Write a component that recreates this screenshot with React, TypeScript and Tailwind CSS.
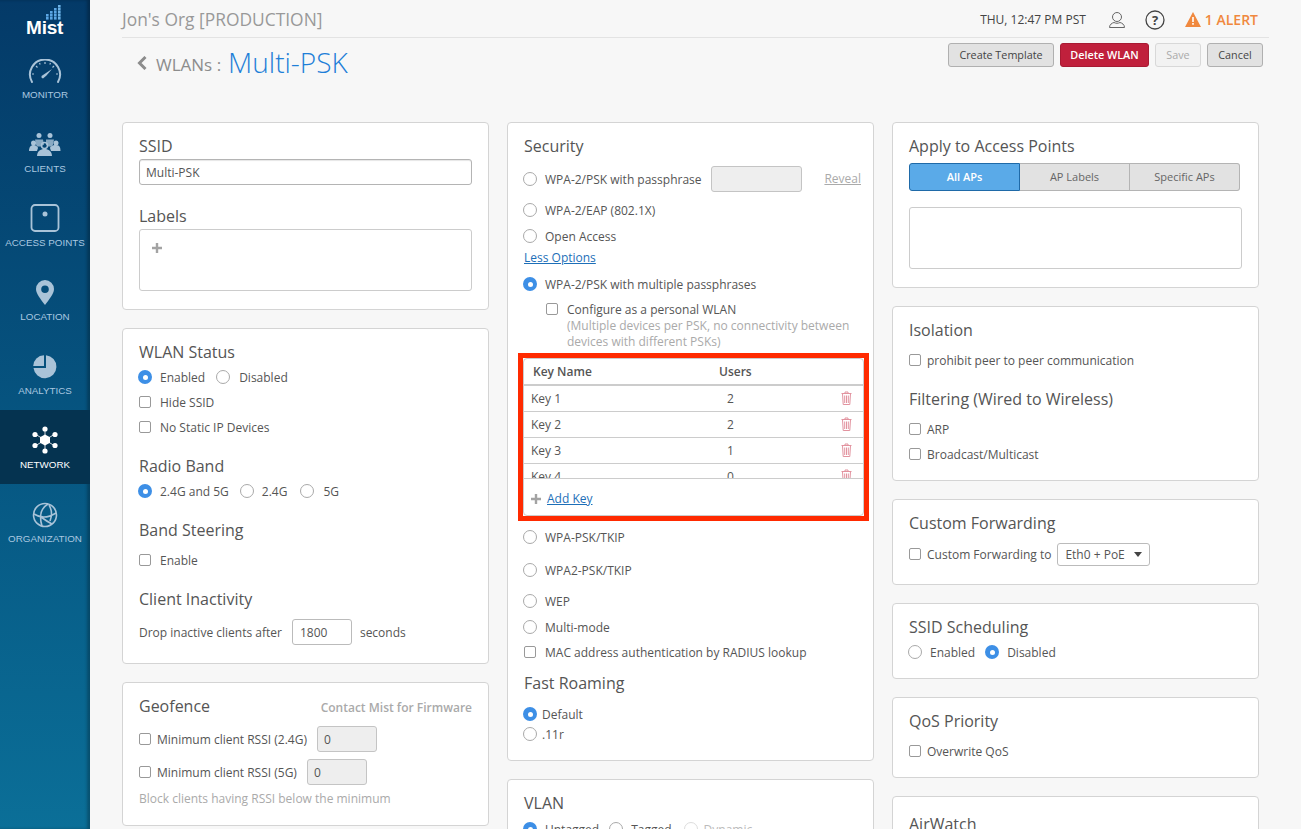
import type { ReactNode } from "react";

const Card = ({ className = "", children }: { className?: string; children: ReactNode }) => (
  <div className={`bg-white border border-[#d4d4d4] rounded-[4px] pt-3 pl-4 pr-4 ${className}`}>{children}</div>
);

const Title = ({ className = "", children }: { className?: string; children: ReactNode }) => (
  <div className={`h-[22px] leading-[22px] text-[16px] text-[#555] ${className}`}>{children}</div>
);

const Radio = ({ on = false, dim = false }: { on?: boolean; dim?: boolean }) =>
  on ? (
    <span className="-ml-[1px] w-[14px] h-[14px] rounded-full bg-[#3d8fe6] flex items-center justify-center shrink-0">
      <span className="w-[5px] h-[5px] rounded-full bg-white" />
    </span>
  ) : (
    <span className={`-ml-[1px] w-[14px] h-[14px] rounded-full border bg-white shrink-0 ${dim ? "border-[#ddd]" : "border-[#a9a9a9]"}`} />
  );

const RadioRow = ({ on, label, className = "gap-[8px]" }: { on?: boolean; label: string; className?: string }) => (
  <div className={`h-5 flex items-center text-[12px] text-[#555] ${className.includes("gap-") ? className : `gap-[8px] ${className}`}`}>
    <Radio on={on} />
    <span className="pt-[2px]">{label}</span>
  </div>
);

const Check = () => <span className="w-[12px] h-[12px] rounded-[2px] border border-[#999] bg-white shrink-0" />;

const CheckRow = ({ label, tight = false, className = "" }: { label: string; tight?: boolean; className?: string }) => (
  <div className={`h-5 flex items-center text-[12px] text-[#555] ${tight ? "gap-[6px]" : "gap-[9px]"} ${className}`}>
    <Check />
    <span className="pt-[2px]">{label}</span>
  </div>
);

const Button = ({ className = "", children }: { className?: string; children: ReactNode }) => (
  <div className={`h-6 rounded-[3px] border flex items-center justify-center text-[10.800px] ${className}`}>{children}</div>
);

const Plus = ({ className = "" }: { className?: string }) => (
  <svg className={className} width="10" height="10" viewBox="0 0 10 10" fill="#a3a3a3">
    <path d="M3.800 0h2.400v3.800H10v2.400H6.200V10H3.800V6.200H0V3.800h3.800z" />
  </svg>
);

const Logo = () => {
  const dots: [number, number][] = [
    [58, 5], [58, 8], [58, 11], [58, 14], [58, 17], [54, 8], [54, 11], [54, 14], [54, 17], [50, 11], [50, 14], [50, 17], [46, 14], [46, 17],
  ];
  return (
    <div className="relative h-[40px]">
      <svg width="90" height="24" viewBox="0 0 90 24" className="absolute left-0 top-0">
        {dots.map(([x, y], i) => (
          <rect key={i} x={x} y={y} width="2.600" height="2.600" fill={i < 5 ? "#6db3e8" : "#5ba6e4"} />
        ))}
      </svg>
      <div className="absolute left-[26px] top-[18px] text-[19px] leading-[20px] font-bold text-white font-['Liberation_Sans',sans-serif] tracking-[-0.2px]">
        Mist
      </div>
    </div>
  );
};

const GaugeIcon = () => (
  <svg width="34" height="25" viewBox="0 0 34 25" fill="none">
    <path d="M4 23 A15 15 0 1 1 30 23" stroke="#a9c3d8" strokeWidth="2" strokeLinecap="round" />
    <path d="M4 15h2M28 15h2M8 7l1.500 1.500M26 7l-1.500 1.500M17 3v2M11.500 4l.7 1.600M22.500 4l-.7 1.600" stroke="#a9c3d8" strokeWidth="1.200" />
    <path d="M24 10 L18.500 16.500 L15 19.500 A2 2 0 0 1 13.500 17 L16.500 15 Z" fill="#a9c3d8" />
  </svg>
);

const ClientsIcon = () => (
  <svg width="32" height="26" viewBox="0 0 32 26" fill="#a9c3d8">
    <circle cx="10" cy="3.500" r="2.500" />
    <circle cx="21" cy="3.500" r="2.500" />
    <path d="M6 7.500h8l1 5-3 2H8l-1-2zM17 7.500h8l-1 5-1 2h-4l-2-2z" opacity="0.8" />
    <circle cx="4.500" cy="11" r="2.500" />
    <circle cx="27" cy="11" r="2.500" />
    <path d="M0 19c0-4 2-6 4.500-6s4.500 2 4.500 3l-1 3zM22 19l-1-3c0-1 2-3 6-3s4.500 3 4.500 6z" />
    <circle cx="15.500" cy="13.500" r="3" fill="none" stroke="#a9c3d8" strokeWidth="1.500" />
    <path d="M8 24c0-4.500 3.500-7 7.500-7s7.500 2.500 7.500 7z" />
  </svg>
);

const ApIcon = () => (
  <svg width="30" height="28" viewBox="0 0 30 28" fill="none">
    <rect x="1.500" y="1" width="27" height="26" rx="3.500" stroke="#a9c3d8" strokeWidth="1.800" />
    <circle cx="15" cy="10" r="2.500" fill="#a9c3d8" />
  </svg>
);

const PinIcon = () => (
  <svg width="18" height="26" viewBox="0 0 18 26" fill="none">
    <path fillRule="evenodd" clipRule="evenodd" d="M9 0a9 9 0 0 1 9 9c0 5-5 10.500-9 16C5 19.500 0 14 0 9a9 9 0 0 1 9-9zm0 5.500a3.800 3.800 0 1 0 0 7.600 3.800 3.800 0 0 0 0-7.600z" fill="#a9c3d8" />
  </svg>
);

const PieIcon = () => (
  <svg width="26" height="26" viewBox="0 0 26 26" fill="#a9c3d8">
    <path d="M12 1.200V12H1.200A11 11 0 0 1 12 1.200z" />
    <path d="M14 1.200A11.500 11.500 0 1 1 1.500 14H14z" />
  </svg>
);

const NetworkIcon = () => (
  <svg width="26" height="28" viewBox="0 0 26 28" fill="white" stroke="white">
    <path d="M13 3v22M3 8l20 12M23 8L3 20" strokeWidth="0.800" />
    <path d="M13 8.500l5 2.800v5.500l-5 2.800-5-2.800v-5.500z" stroke="none" />
    <circle cx="13" cy="3" r="2.600" stroke="none" />
    <circle cx="13" cy="25" r="2.600" stroke="none" />
    <circle cx="3" cy="8.500" r="2.600" stroke="none" />
    <circle cx="23" cy="8.500" r="2.600" stroke="none" />
    <circle cx="3" cy="19.500" r="2.600" stroke="none" />
    <circle cx="23" cy="19.500" r="2.600" stroke="none" />
  </svg>
);

const GlobeIcon = () => (
  <svg width="26" height="26" viewBox="0 0 26 26" fill="none" stroke="#a9c3d8" strokeWidth="1.600">
    <circle cx="13" cy="13" r="11.500" />
    <path d="M16 2c-7 4-9 12-6 22M2 12c6 4 14 4 22-1M9 15c4 3 9 6 11 7M17 3c3 5 3 11 1 16" />
  </svg>
);

const NavItem = ({ icon, label, active = false }: { icon: ReactNode; label: string; active?: boolean }) => (
  <div className={`h-[74px] flex flex-col items-center ${active ? "bg-[#053350]" : ""}`}>
    <div className="h-[40px] mt-[4px] flex items-end justify-center">{icon}</div>
    <div className={`mt-[4px] text-[9.800px] leading-[14px] font-['Liberation_Sans',sans-serif] whitespace-nowrap ${active ? "text-white" : "text-[#a9c8e0]"}`}>
      {label}
    </div>
  </div>
);

const Sidebar = () => (
  <div className="w-[90px] h-[829px] shrink-0 bg-gradient-to-b from-[#043a68] to-[#0b6f98] shadow-[inset_-3px_0_3px_rgba(0,0,0,0.25)]">
    <Logo />
    <NavItem icon={<GaugeIcon />} label="MONITOR" />
    <NavItem icon={<ClientsIcon />} label="CLIENTS" />
    <NavItem icon={<ApIcon />} label="ACCESS POINTS" />
    <NavItem icon={<PinIcon />} label="LOCATION" />
    <NavItem icon={<PieIcon />} label="ANALYTICS" />
    <NavItem icon={<NetworkIcon />} label="NETWORK" active />
    <NavItem icon={<GlobeIcon />} label="ORGANIZATION" />
  </div>
);

const Header = () => (
  <div className="h-[38px] w-[1147px] border-b border-[#e3e3e3] flex items-center justify-between pt-[2px]">
    <div className="text-[17.400px] text-[#999]">Jon's Org [PRODUCTION]</div>
    <div className="flex items-center pr-[11px]">
      <span className="text-[12px] text-[#444]">THU, 12:47 PM PST</span>
      <svg className="ml-[22px]" width="18" height="18" viewBox="0 0 18 18" fill="none" stroke="#666" strokeWidth="1">
        <circle cx="9" cy="6" r="4.500" />
        <path d="M1.500 16.500c0-3 2.500-4.500 4.500-5 2 1 4 1 6 0 2 .5 4.500 2 4.500 5z" />
      </svg>
      <svg className="ml-[19px]" width="20" height="20" viewBox="0 0 20 20" fill="none">
        <circle cx="10" cy="10" r="9" stroke="#444" strokeWidth="1.300" />
        <text x="10" y="14.500" textAnchor="middle" fontSize="13" fontWeight="700" fill="#444" fontFamily="Open Sans">?</text>
      </svg>
      <svg className="ml-[20px]" width="16" height="15" viewBox="0 0 16 15">
        <path d="M8 0l8 15H0z" fill="#f0883e" />
        <path d="M7.200 5h1.600v5H7.200zM7.200 11h1.600v1.800H7.200z" fill="white" />
      </svg>
      <span className="ml-[4px] text-[14px] font-semibold text-[#f0883e]">1 ALERT</span>
    </div>
  </div>
);

const TitleBar = () => (
  <div className="h-[84px] w-[1141px] flex justify-between items-start">
    <div className="flex items-center pl-[15px] mt-[5px] h-[38px]">
      <svg className="mt-[2px]" width="10" height="14" viewBox="0 0 10 14" fill="none">
        <path d="M8.500 1L2.500 7l6 6" stroke="#8c8c8c" strokeWidth="3" />
      </svg>
      <span className="ml-[9px] mt-[6px] text-[17px] text-[#8c8c8c]">WLANs :</span>
      <span className="ml-[7px] text-[28px] font-light text-[#1f7fd8]">Multi-PSK</span>
    </div>
    <div className="flex mt-[5px]">
      <Button className="w-[106px] bg-[#e2e2e2] border-[#b0b0b0] text-[#444]">Create Template</Button>
      <Button className="w-[89px] ml-[6px] bg-[#c0203c] border-[#a81a33] text-white font-semibold">Delete WLAN</Button>
      <Button className="w-[46px] ml-[6px] bg-[#f2f2f2] border-[#d8d8d8] text-[#aaa]">Save</Button>
      <Button className="w-[56px] ml-[6px] bg-[#e2e2e2] border-[#b0b0b0] text-[#444]">Cancel</Button>
    </div>
  </div>
);

const GrayInput = ({ value, className = "" }: { value?: string; className?: string }) => (
  <div className={`h-[26px] rounded-[3px] border border-[#c4c4c4] bg-[#eeeeee] text-[12px] text-[#555] flex items-center pl-[6px] pt-[2px] shrink-0 ${className}`}>{value}</div>
);

const TrashIcon = () => (
  <svg className="-mt-[2px]" width="11" height="14" viewBox="0 0 11 14" fill="none" stroke="#e2939f" strokeWidth="1">
    <path d="M.5 2.500h10M4 2.500V1h3v1.500M1.500 2.500l.7 11h6.600l.7-11M3.700 4.500v7.500M5.500 4.500v7.500M7.300 4.500v7.500" />
  </svg>
);

const keys = [
  { name: "Key 1", users: "2" },
  { name: "Key 2", users: "2" },
  { name: "Key 3", users: "1" },
  { name: "Key 4", users: "0" },
];

const KeyTable = () => (
  <div className="-ml-[6px] mt-[4px] w-[351px] h-[168px] border-[5px] border-[#ff2a00] bg-white">
    <div className="h-[158px] rounded-[4px] border border-[#ccc] flex flex-col">
      <div className="h-[25px] shrink-0 flex items-center font-semibold text-[12px] text-[#555]">
        <span className="ml-[9px] w-[186px]">Key Name</span>
        <span>Users</span>
      </div>
      <div className="h-[95px] shrink-0 overflow-hidden border-t-2 border-b border-[#ccc]">
        {keys.map((k) => (
          <div key={k.name} className="h-[26px] flex items-center border-b border-[#ccc] text-[12px] text-[#555]">
            <span className="ml-[7px] w-[196px]">{k.name}</span>
            <span className="w-[114px]">{k.users}</span>
            <TrashIcon />
          </div>
        ))}
      </div>
      <div className="flex-1 flex items-center text-[12px] pl-[7px] pt-[4px]">
        <Plus />
        <span className="ml-[6px] text-[#1d6fb8] underline">Add Key</span>
      </div>
    </div>
  </div>
);

const ColumnOne = () => (
  <div className="flex flex-col gap-[18px]">
    <Card className="pb-[18px]">
      <Title>SSID</Title>
      <div className="mt-[2px] h-[26px] rounded-[3px] border border-[#b4b4b4] text-[12px] text-[#555] flex items-center pl-[6px] pt-[2px] shadow-[inset_0_1px_1px_rgba(0,0,0,0.1)]">Multi-PSK</div>
      <Title className="mt-[20px]">Labels</Title>
      <div className="mt-[2px] h-[62px] rounded-[3px] border border-[#ccc] pl-[12px] pt-[13px]">
        <Plus />
      </div>
    </Card>
    <Card className="pb-[18px]">
      <Title>WLAN Status</Title>
      <div className="mt-[4px] flex">
        <RadioRow on label="Enabled" />
        <RadioRow className="ml-[12px] gap-[9px]" label="Disabled" />
      </div>
      <CheckRow className="mt-[5px]" label="Hide SSID" />
      <CheckRow className="mt-[5px]" label="No Static IP Devices" />
      <Title className="mt-[18px]">Radio Band</Title>
      <div className="mt-[4px] flex">
        <RadioRow on label="2.4G and 5G" />
        <RadioRow className="ml-[12px]" label="2.4G" />
        <RadioRow className="ml-[14px] gap-[9px]" label="5G" />
      </div>
      <Title className="mt-[18px]">Band Steering</Title>
      <CheckRow className="mt-[9px]" label="Enable" />
      <Title className="mt-[18px]">Client Inactivity</Title>
      <div className="mt-[9px] flex items-center text-[12px] text-[#555]">
        <span className="pt-[2px]">Drop inactive clients after</span>
        <div className="ml-[10px] w-[60px] h-[26px] rounded-[3px] border border-[#bbb] flex items-center pl-[7px] pt-[2px]">1800</div>
        <span className="ml-[8px] pt-[2px]">seconds</span>
      </div>
    </Card>
    <Card className="pb-[16px]">
      <div className="flex justify-between items-center">
        <Title>Geofence</Title>
        <span className="pt-[4px] text-[12px] font-semibold text-[#aaa]">Contact Mist for Firmware</span>
      </div>
      <div className="mt-[9px] flex items-center">
        <CheckRow tight label="Minimum client RSSI (2.4G)" />
        <GrayInput className="ml-[10px] w-[60px]" value="0" />
      </div>
      <div className="mt-[7px] flex items-center">
        <CheckRow tight label="Minimum client RSSI (5G)" />
        <GrayInput className="ml-[10px] w-[60px]" value="0" />
      </div>
      <div className="mt-[4px] h-5 leading-5 text-[12px] text-[#aaa]">Block clients having RSSI below the minimum</div>
    </Card>
  </div>
);

const ColumnTwo = () => (
  <div className="flex flex-col gap-[18px]">
    <Card className="pb-[16px] pr-[12px]">
      <Title>Security</Title>
      <div className="mt-[9px] flex items-center">
        <RadioRow label="WPA-2/PSK with passphrase" />
        <GrayInput className="ml-[9px] w-[91px]" />
        <span className="ml-auto text-[12px] text-[#aaa] underline">Reveal</span>
      </div>
      <RadioRow className="mt-[8px]" label="WPA-2/EAP (802.1X)" />
      <RadioRow className="mt-[6px]" label="Open Access" />
      <div className="mt-[2px] h-5 leading-5 text-[12px] text-[#1d6fb8] underline">Less Options</div>
      <RadioRow className="mt-[6px]" on label="WPA-2/PSK with multiple passphrases" />
      <CheckRow className="mt-[5px] ml-[22px]" label="Configure as a personal WLAN" />
      <div className="-mt-[1px] ml-[43px] text-[12px] leading-[15.500px] text-[#aaa]">
        (Multiple devices per PSK, no connectivity between
        <br />
        devices with different PSKs)
      </div>
      <KeyTable />
      <RadioRow className="mt-[6px]" label="WPA-PSK/TKIP" />
      <RadioRow className="mt-[13px]" label="WPA2-PSK/TKIP" />
      <RadioRow className="mt-[11px]" label="WEP" />
      <RadioRow className="mt-[6px]" label="Multi-mode" />
      <CheckRow className="mt-[5px]" label="MAC address authentication by RADIUS lookup" />
      <Title className="mt-[10px]">Fast Roaming</Title>
      <RadioRow className="mt-[10px] gap-[5px]" on label="Default" />
      <RadioRow className="gap-[5px]" label=".11r" />
    </Card>
    <Card className="pb-[16px]">
      <Title>VLAN</Title>
      <div className="mt-[5px] flex">
        <RadioRow on label="Untagged" />
        <RadioRow className="ml-[11px]" label="Tagged" />
        <div className="ml-[13px] h-5 flex items-center gap-[6px] text-[12px] text-[#bbb]">
          <Radio dim />
          <span className="pt-[2px]">Dynamic</span>
        </div>
      </div>
    </Card>
  </div>
);

const ColumnThree = () => (
  <div className="flex flex-col gap-[18px]">
    <Card className="pb-[18px]">
      <Title>Apply to Access Points</Title>
      <div className="mt-[6px] w-[331px] h-[28px] flex text-[11px]">
        <div className="w-[111px] rounded-l-[3px] border border-[#1f6aa8] bg-[#5aaae8] text-white font-semibold flex items-center justify-center">All APs</div>
        <div className="w-[110px] border-y border-r border-[#b4b4b4] bg-[#e2e2e2] text-[#666] flex items-center justify-center">AP Labels</div>
        <div className="w-[110px] rounded-r-[3px] border-y border-r border-[#b4b4b4] bg-[#e2e2e2] text-[#666] flex items-center justify-center">Specific APs</div>
      </div>
      <div className="mt-[16px] h-[62px] rounded-[3px] border border-[#ccc]" />
    </Card>
    <Card className="pb-[16px]">
      <Title>Isolation</Title>
      <CheckRow tight className="mt-[9px]" label="prohibit peer to peer communication" />
      <Title className="mt-[18px]">Filtering (Wired to Wireless)</Title>
      <CheckRow tight className="mt-[9px]" label="ARP" />
      <CheckRow tight className="mt-[5px]" label="Broadcast/Multicast" />
    </Card>
    <Card className="pb-[18px]">
      <Title>Custom Forwarding</Title>
      <div className="mt-[9px] h-[23px] flex items-center">
        <CheckRow tight className="-mt-[1px]" label="Custom Forwarding to" />
        <div className="ml-[6px] w-[93px] h-[23px] rounded-[3px] border border-[#bbb] text-[12px] text-[#555] flex items-center justify-between pl-[7px] pr-[7px]">
          <span>Eth0 + PoE</span>
          <span className="w-0 h-0 border-x-[4px] border-x-transparent border-t-[5px] border-t-[#444]" />
        </div>
      </div>
    </Card>
    <Card className="pb-[16px]">
      <Title>SSID Scheduling</Title>
      <div className="mt-[4px] flex">
        <RadioRow label="Enabled" />
        <RadioRow on className="ml-[11px]" label="Disabled" />
      </div>
    </Card>
    <Card className="pb-[16px]">
      <Title>QoS Priority</Title>
      <CheckRow tight className="mt-[9px]" label="Overwrite QoS" />
    </Card>
    <Card className="pb-[16px]">
      <Title className="mt-[4px]">AirWatch</Title>
    </Card>
  </div>
);

export default function App() {
  return (
    <div className="w-[1301px] h-[829px] overflow-hidden flex bg-[#f7f7f7] font-['Open_Sans',sans-serif]">
      <Sidebar />
      <div className="pl-[32px] flex-1">
        <Header />
        <TitleBar />
        <div className="grid grid-cols-[367px_367px_367px] gap-x-[18px]">
          <ColumnOne />
          <ColumnTwo />
          <ColumnThree />
        </div>
      </div>
    </div>
  );
}
